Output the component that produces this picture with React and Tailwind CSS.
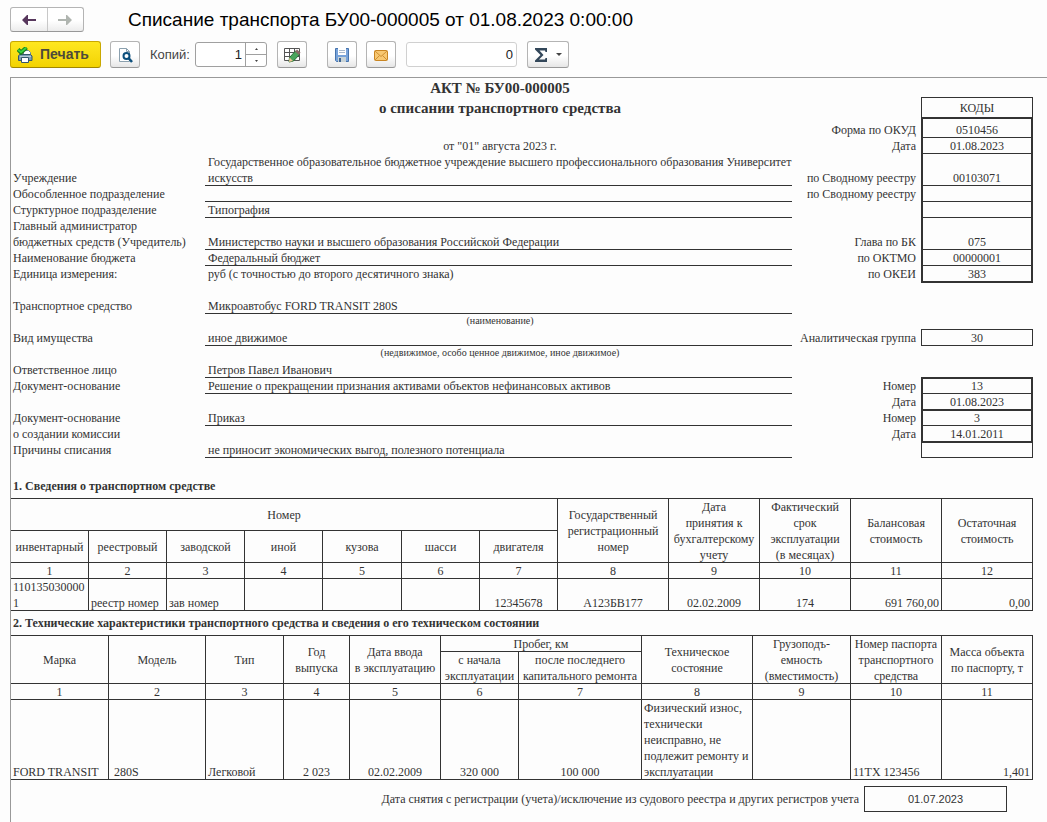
const requisites = [
  { height: 'h-5', title: 'АКТ № БУ00-000005', box: 'border-b' },
  { height: 'h-5', title: 'о списании транспортного средства', code: 'КОДЫ', box: 'border-x border-b align-middle' },
  { height: 'h-5', codeLabel: 'Форма по ОКУД', code: '0510456', box: 'border-x-2 border-t border-b align-bottom' },
  { height: 'h-4', value: 'от "01" августа 2023 г.', center: true, codeLabel: 'Дата', code: '01.08.2023', box: 'border-x-2 border-b align-bottom' },
  {
    height: 'h-8',
    label: 'Учреждение',
    value: 'Государственное образовательное бюджетное учреждение высшего профессионального образования Университет искусств',
    line: true,
    codeLabel: 'по Сводному реестру',
    code: '00103071',
    box: 'border-x-2 border-b align-bottom'
  },
  { height: 'h-4', label: 'Обособленное подразделение', line: true, codeLabel: 'по Сводному реестру', box: 'border-x-2 border-b' },
  { height: 'h-4', label: 'Стурктурное подразделение', value: 'Типография', line: true, box: 'border-x-2 border-b' },
  {
    height: 'h-8',
    label: 'Главный администратор\nбюджетных средств (Учредитель)',
    value: 'Министерство науки и высшего образования Российской Федерации',
    line: true,
    codeLabel: 'Глава по БК',
    code: '075',
    box: 'border-x-2 border-b align-bottom'
  },
  { height: 'h-4', label: 'Наименование бюджета', value: 'Федеральный бюджет', line: true, codeLabel: 'по ОКТМО', code: '00000001', box: 'border-x-2 border-b align-bottom' },
  { height: 'h-4', label: 'Единица измерения:', value: 'руб (с точностью до второго десятичного знака)', codeLabel: 'по ОКЕИ', code: '383', box: 'border-x-2 border-b align-bottom' },
  { height: 'h-4', box: 'border-t' },
  { height: 'h-4', label: 'Транспортное средство', value: 'Микроавтобус FORD TRANSIT 280S', line: true },
  { height: 'h-4', note: '(наименование)', box: 'border-b' },
  { height: 'h-4', label: 'Вид имущества', value: 'иное движимое', line: true, codeLabel: 'Аналитическая группа', code: '30', box: 'border-x border-b align-bottom' },
  { height: 'h-4', note: '(недвижимое, особо ценное движимое, иное движимое)' },
  { height: 'h-4', label: 'Ответственное лицо', value: 'Петров Павел Иванович', line: true, box: 'border-b' },
  {
    height: 'h-4',
    label: 'Документ-основание',
    value: 'Решение о прекращении признания активами объектов нефинансовых активов',
    line: true,
    codeLabel: 'Номер',
    code: '13',
    box: 'border-x-2 border-t border-b align-bottom'
  },
  { height: 'h-4', codeLabel: 'Дата', code: '01.08.2023', box: 'border-x-2 border-b align-bottom' },
  { height: 'h-4', label: 'Документ-основание', value: 'Приказ', line: true, codeLabel: 'Номер', code: '3', box: 'border-x-2 border-t border-b align-bottom' },
  { height: 'h-4', label: 'о создании комиссии', codeLabel: 'Дата', code: '14.01.2011', box: 'border-x-2 border-b align-bottom' },
  { height: 'h-4', label: 'Причины списания', value: 'не приносит экономических выгод, полезного потенциала', line: true, box: 'border-x border-t border-b' }
]

const numberKinds = ['инвентарный', 'реестровый', 'заводской', 'иной', 'кузова', 'шасси', 'двигателя']

const buttonClass =
  'flex h-[27px] items-center justify-center rounded-[3px] border border-[#b4b4b4] border-b-[#989898] bg-linear-to-b from-white from-55% to-[#e6e6e6]'

function Columns({ widths }) {
  return (
    <colgroup>
      {widths.map((width, i) => (
        <col key={i} style={{ width }} />
      ))}
    </colgroup>
  )
}

function Cell({ as: Tag = 'td', children, className = 'text-center', ...rest }) {
  return (
    <Tag className={`border-r border-b border-[#333] px-0.5 font-normal ${className}`} {...rest}>
      <div className="-mb-px whitespace-pre-line leading-4">{children}</div>
    </Tag>
  )
}

function Head({ children, ...rest }) {
  return (
    <Cell as="th" className="align-middle text-center" {...rest}>
      {children}
    </Cell>
  )
}

function NumberRow({ count }) {
  return (
    <tr className="h-4">
      {Array.from({ length: count }, (_, i) => (
        <Cell key={i}>{i + 1}</Cell>
      ))}
    </tr>
  )
}

function PrintIcon() {
  return (
    <svg width="16" height="16" viewBox="0 0 16 16" aria-hidden="true">
      <path d="M6.500 8V3.500h5l2 2V8" fill="#fff" stroke="#6b8796" />
      <path d="M2.500 7.500h11l1.500 1.500v4.500h-13.500V9z" fill="#7d9fb5" stroke="#34566c" />
      <path d="M3 9.500h11" stroke="#b5cad6" />
      <path d="M4.500 10.500h7v5h-7z" fill="#fff" stroke="#34566c" />
      <path d="M1 2.500 4 5.500 9.500.500" fill="none" stroke="#157a1c" strokeWidth="4" />
      <path d="M1.200 2.700 4 5.200 9.200.700" fill="none" stroke="#3bd33b" strokeWidth="2" />
    </svg>
  )
}

function PreviewIcon() {
  return (
    <svg width="16" height="16" viewBox="0 0 16 16" aria-hidden="true">
      <path d="M2.500 1.500h7l3 3v10h-10z" fill="#fff" stroke="#8ba0ae" />
      <path d="M9.500 1.500v3h3" fill="none" stroke="#8ba0ae" />
      <circle cx="9.500" cy="9" r="3" fill="#fff" stroke="#0d4f7c" strokeWidth="2" />
      <path d="m11.500 11 3.500 4" stroke="#0d4f7c" strokeWidth="2.500" />
    </svg>
  )
}

function TableEditIcon() {
  return (
    <svg width="18" height="16" viewBox="0 0 18 16" aria-hidden="true">
      <path d="M1.500 1.500h15v12h-15z" fill="#fff" stroke="#555" />
      <path d="M1.500 5.500h15M1.500 9.500h15M6.500 1.500v12M11.500 1.500v12" stroke="#555" />
      <path d="m6 15 .500-4.500 6-6.500 4 3.500-6 6.500z" fill="#4aa55c" stroke="#277238" />
      <path d="m6 15 .500-4.500 3.500 3.500z" fill="#f0c796" />
      <path d="m12 4.500 2-2 3.500 3-1.500 2.500z" fill="#8c6a68" />
    </svg>
  )
}

function SaveIcon() {
  return (
    <svg width="16" height="16" viewBox="0 0 16 16" aria-hidden="true">
      <path d="M1.500 1.500h13v13h-12l-1-1z" fill="#78a3da" stroke="#4674ae" />
      <path d="M4 1h8v7H4z" fill="#fff" />
      <path d="M5 3.500h6M5 5.500h6" stroke="#a9b9cc" />
      <path d="M4 10h8v5H4z" fill="#c9d3d6" />
      <path d="M5 11h2v4H5z" fill="#3e6594" />
    </svg>
  )
}

function MailIcon() {
  return (
    <svg width="16" height="16" viewBox="0 0 16 16" aria-hidden="true">
      <rect x="1.500" y="3.500" width="13" height="10" rx="1" fill="#f8c872" stroke="#c98522" />
      <path d="m2 4 6 5.500L14 4M2 13l4.500-4.500M14 13 9.500 8.500" fill="none" stroke="#d08f30" />
    </svg>
  )
}

function NavArrow({ flip }) {
  return (
    <svg width="14" height="10" viewBox="0 0 14 10" aria-hidden="true">
      <path d={flip ? 'M0 4h8V0h1l5 5-5 5H8V6H0z' : 'M14 4H6V0H5L0 5l5 5h1V6h8z'} fill="currentColor" />
    </svg>
  )
}

function Toolbar() {
  return (
    <div className="mt-[9px] flex items-center pl-2.5 text-[13px] text-[#444]">
      <button
        type="button"
        className="flex h-[27px] w-[91px] items-center gap-[7px] rounded-[3px] border border-[#c9a800] border-b-[#a08600] bg-linear-to-b from-[#ffe71f] to-[#f2d300] pl-1.5 text-[14px] font-bold text-[#4d4a3a]"
      >
        <PrintIcon />
        Печать
      </button>
      <button type="button" aria-label="Предварительный просмотр" className={`${buttonClass} ml-[9px] w-[30px]`}>
        <PreviewIcon />
      </button>
      <label htmlFor="copies" className="ml-2.5 w-[45px]">
        Копий:
      </label>
      <div className="flex h-[25px] w-[72px] rounded-[3px] border border-[#a0a0a0] bg-white">
        <input id="copies" type="text" defaultValue="1" className="w-[49px] pr-[3px] text-right text-[#222] outline-none" />
        <div className="flex flex-1 flex-col border-l border-[#a0a0a0]">
          <button type="button" aria-label="Больше" className="flex flex-1 items-center justify-center border-b border-[#a0a0a0]">
            <svg width="3" height="2" viewBox="0 0 3 2" aria-hidden="true"><path d="M0 2 1.500 0 3 2z" fill="#444" /></svg>
          </button>
          <button type="button" aria-label="Меньше" className="flex flex-1 items-center justify-center">
            <svg width="3" height="2" viewBox="0 0 3 2" aria-hidden="true"><path d="M0 0h3L1.500 2z" fill="#444" /></svg>
          </button>
        </div>
      </div>
      <button type="button" aria-label="Редактирование" className={`${buttonClass} ml-2.5 w-[30px]`}>
        <TableEditIcon />
      </button>
      <button type="button" aria-label="Сохранить" className={`${buttonClass} ml-5 w-[30px]`}>
        <SaveIcon />
      </button>
      <button type="button" aria-label="Отправить" className={`${buttonClass} ml-[9px] w-[30px]`}>
        <MailIcon />
      </button>
      <input
        type="text"
        aria-label="Сумма"
        defaultValue="0"
        className="ml-2.5 h-[25px] w-[111px] rounded-[3px] border border-[#d0d0d0] bg-white pr-[3px] text-right text-[#222] outline-none"
      />
      <button type="button" aria-label="Вычислить" className={`${buttonClass} ml-2.5 w-[42px] gap-2`}>
        <svg width="13" height="14" viewBox="0 0 13 14" aria-hidden="true">
          <path d="M0 0h12v4h-1.500L10 2.500H4.500L8.500 7l-4.500 4.500h6L10.500 10H12v4H0v-1.500L5.500 7 0 1.500z" fill="#33475a" />
        </svg>
        <svg width="6" height="3" viewBox="0 0 6 3" aria-hidden="true"><path d="M0 0h6L3 3z" fill="#444" /></svg>
      </button>
    </div>
  )
}

function Requisites() {
  return (
    <table className="w-full table-fixed border-separate border-spacing-0">
      <Columns widths={[194, 587, 129, 112]} />
      <tbody>
        {requisites.map((row, i) => (
          <tr key={i} className={row.height}>
            <td className="pl-0.5 align-bottom">
              <div className="whitespace-pre-line leading-4">{row.label}</div>
            </td>
            <td className={`border-[#333] pl-[3px] align-bottom ${row.line ? 'border-b' : ''}`}>
              {row.title && <h2 className="text-center text-[15px] leading-5 font-bold">{row.title}</h2>}
              {row.note && <p className="text-center text-[10px] leading-[14px] pb-0.5">{row.note}</p>}
              {row.value && (
                <div className={`leading-4 ${row.line ? '-mb-px' : ''} ${row.center ? 'text-center' : ''}`}>{row.value}</div>
              )}
            </td>
            <td className="pr-[5px] text-right align-bottom">
              <div className="leading-4">{row.codeLabel}</div>
            </td>
            <td className={`border-[#333] text-center ${row.box || ''}`}>
              <div className="-my-px leading-4">{row.code}</div>
            </td>
          </tr>
        ))}
      </tbody>
    </table>
  )
}

function VehicleTable() {
  return (
    <table className="w-full table-fixed border-separate border-spacing-0 border-t border-[#333]">
      <Columns widths={[78, 78, 78, 78, 79, 78, 78, 111, 91, 91, 91, 91]} />
      <thead>
        <tr className="h-8">
          <Head colSpan={7}>Номер</Head>
          <Head rowSpan={2}>{'Государственный\nрегистрационный\nномер'}</Head>
          <Head rowSpan={2}>{'Дата\nпринятия к\nбухгалтерскому\nучету'}</Head>
          <Head rowSpan={2}>{'Фактический\nсрок\nэксплуатации\n(в месяцах)'}</Head>
          <Head rowSpan={2}>{'Балансовая\nстоимость'}</Head>
          <Head rowSpan={2}>{'Остаточная\nстоимость'}</Head>
        </tr>
        <tr className="h-8">
          {numberKinds.map((kind) => (
            <Head key={kind}>{kind}</Head>
          ))}
        </tr>
      </thead>
      <tbody>
        <NumberRow count={12} />
        <tr className="h-8 align-bottom">
          <Cell className="text-left break-all">1101350300001</Cell>
          <Cell className="text-left">реестр номер</Cell>
          <Cell className="text-left">зав номер</Cell>
          <Cell />
          <Cell />
          <Cell />
          <Cell>12345678</Cell>
          <Cell>А123БВ177</Cell>
          <Cell>02.02.2009</Cell>
          <Cell>174</Cell>
          <Cell className="text-right">691 760,00</Cell>
          <Cell className="text-right">0,00</Cell>
        </tr>
      </tbody>
    </table>
  )
}

function ConditionTable() {
  return (
    <table className="w-full table-fixed border-separate border-spacing-0 border-t border-[#333]">
      <Columns widths={[98, 97, 78, 66, 91, 78, 123, 111, 98, 91, 91]} />
      <thead>
        <tr className="h-4">
          <Head rowSpan={2}>Марка</Head>
          <Head rowSpan={2}>Модель</Head>
          <Head rowSpan={2}>Тип</Head>
          <Head rowSpan={2}>{'Год\nвыпуска'}</Head>
          <Head rowSpan={2}>{'Дата ввода\nв эксплуатацию'}</Head>
          <Head colSpan={2}>Пробег, км</Head>
          <Head rowSpan={2}>{'Техническое\nсостояние'}</Head>
          <Head rowSpan={2}>{'Грузоподъ-\nемность\n(вместимость)'}</Head>
          <Head rowSpan={2}>{'Номер паспорта\nтранспортного\nсредства'}</Head>
          <Head rowSpan={2}>{'Масса объекта\nпо паспорту, т'}</Head>
        </tr>
        <tr className="h-8">
          <Head>{'с начала\nэксплуатации'}</Head>
          <Head>{'после последнего\nкапитального ремонта'}</Head>
        </tr>
      </thead>
      <tbody>
        <NumberRow count={11} />
        <tr className="h-20 align-bottom">
          <Cell className="text-left">FORD TRANSIT</Cell>
          <Cell className="pl-[5px] text-left">280S</Cell>
          <Cell className="text-left">Легковой</Cell>
          <Cell>2 023</Cell>
          <Cell>02.02.2009</Cell>
          <Cell>320 000</Cell>
          <Cell>100 000</Cell>
          <Cell className="text-left">Физический износ, технически неисправно, не подлежит ремонту и эксплуатации</Cell>
          <Cell />
          <Cell className="text-left">11ТХ 123456</Cell>
          <Cell className="text-right">1,401</Cell>
        </tr>
      </tbody>
    </table>
  )
}

function App() {
  return (
    <div className="flex min-h-screen flex-col bg-[#fdfdfd] font-['Liberation_Sans',Arial,sans-serif]">
      <header className="flex items-center pt-[7px] pl-2.5">
        <div className="flex h-[25px] w-[74px] rounded-[3px] border border-[#b4b4b4] border-b-[#989898] bg-linear-to-b from-white from-55% to-[#ececec]">
          <button type="button" aria-label="Назад" className="flex flex-1 items-center justify-center border-r border-[#c8c8c8] text-[#57375c]">
            <NavArrow />
          </button>
          <button type="button" aria-label="Вперед" className="flex flex-1 items-center justify-center text-[#b0b5b0]">
            <NavArrow flip />
          </button>
        </div>
        <h1 className="ml-11 text-[19px] leading-6 text-black">Списание транспорта БУ00-000005 от 01.08.2023 0:00:00</h1>
      </header>

      <Toolbar />

      <main className="mt-[9px] ml-2.5 flex-1 border-t border-l border-[#999] pr-3.5 font-['Liberation_Serif','Times_New_Roman',serif] text-[12px] text-[#333]">
        <Requisites />
        <h3 className="pt-5 pb-1 pl-0.5 leading-4 font-bold">1. Сведения о транспортном средстве</h3>
        <VehicleTable />
        <h3 className="pt-1 pb-1 pl-0.5 leading-4 font-bold">
          2. Технические характеристики транспортного средства и сведения о его техническом состоянии
        </h3>
        <ConditionTable />
        <div className="mt-1.5 flex items-center justify-end pr-[26px]">
          <label htmlFor="removal-date" className="mr-[5px]">
            Дата снятия с регистрации (учета)/исключение из судового реестра и других регистров учета
          </label>
          <input
            id="removal-date"
            type="text"
            defaultValue="01.07.2023"
            className="h-[26px] w-[143px] border border-[#333] text-center font-['Liberation_Sans',Arial,sans-serif] text-[11px] outline-none"
          />
        </div>
      </main>
    </div>
  )
}

export default App
